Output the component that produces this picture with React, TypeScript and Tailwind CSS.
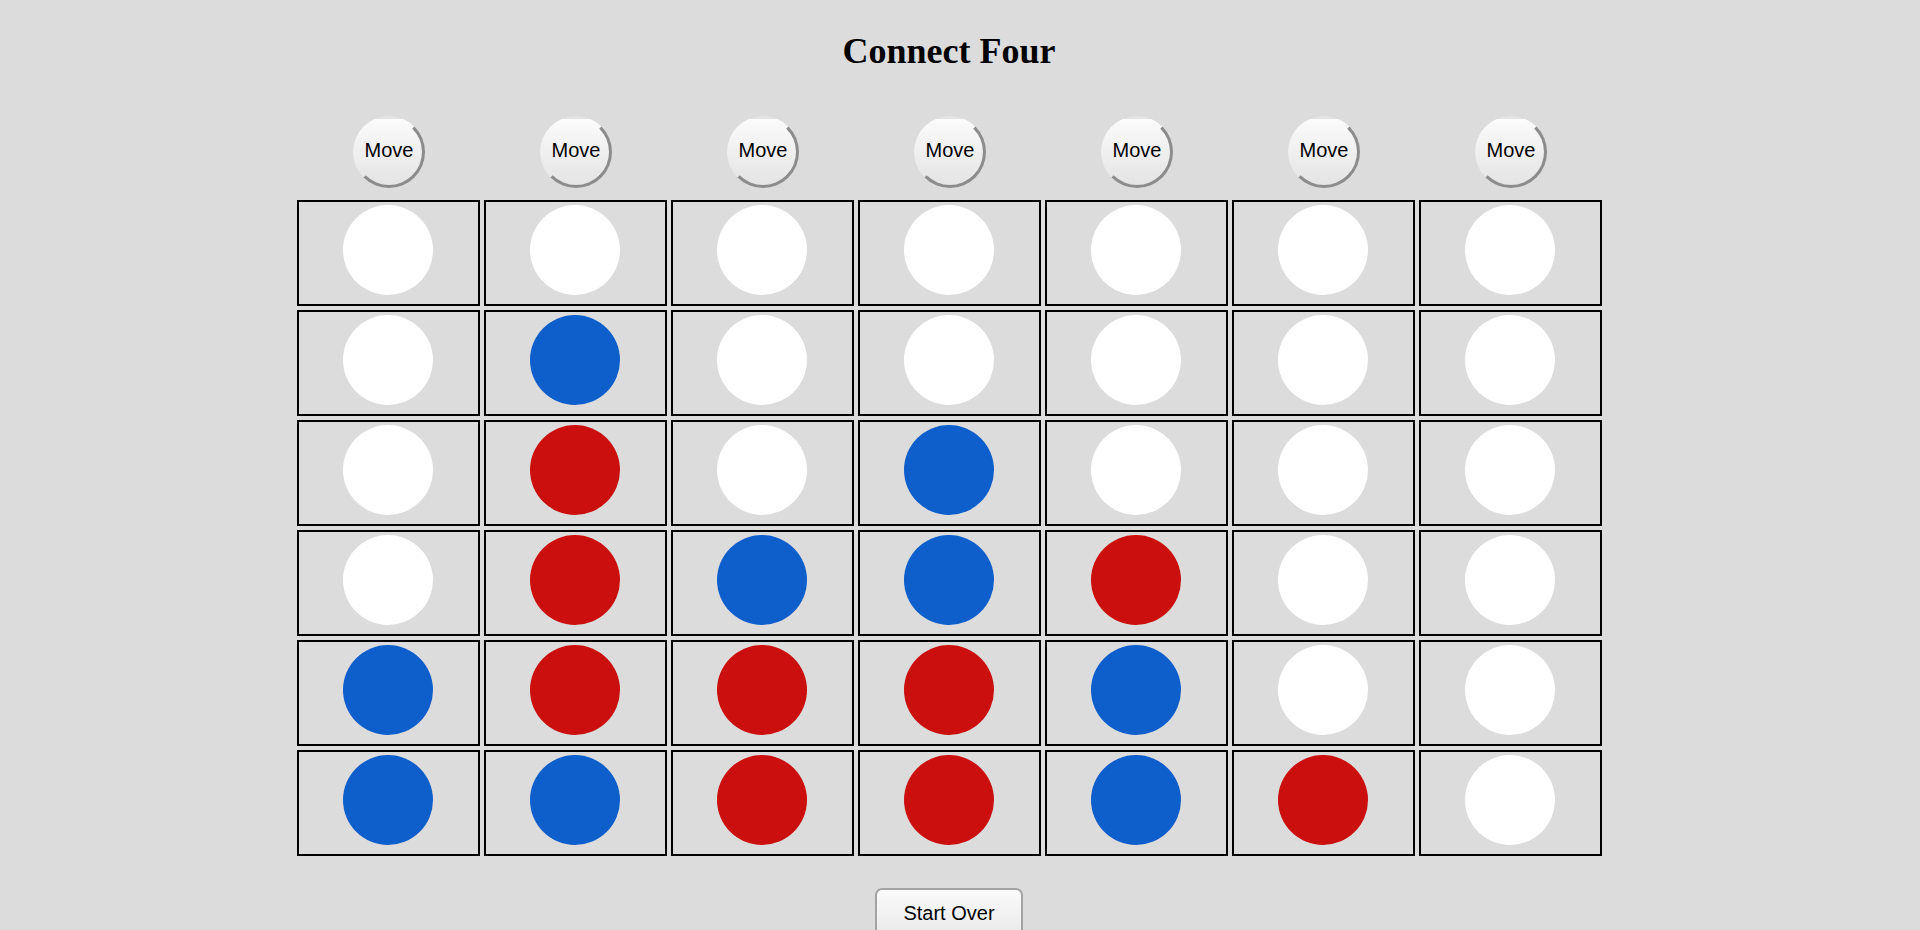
import React from "react";

type C = "W" | "B" | "R";

const board: C[][] = [
  ["W", "W", "W", "W", "W", "W", "W"],
  ["W", "B", "W", "W", "W", "W", "W"],
  ["W", "R", "W", "B", "W", "W", "W"],
  ["W", "R", "B", "B", "R", "W", "W"],
  ["B", "R", "R", "R", "B", "W", "W"],
  ["B", "B", "R", "R", "B", "R", "W"],
];

function Disc({ c }: { c: C }) {
  const cls =
    c === "B" ? "bg-[#0e5ecb]" : c === "R" ? "bg-[#cb0e0e]" : "bg-white";
  return <div className={`w-[90px] h-[90px] rounded-full ${cls}`} />;
}

export default function App() {
  return (
    <div className="w-[1920px] h-[930px] overflow-hidden bg-[#dcdcdc] text-black font-['Liberation_Sans',Arial,sans-serif]">
      <div className="w-[1898px] flex flex-col items-center">
        <h2 className="pt-[31px] text-[36px] leading-[40px] font-bold font-['Liberation_Serif','Times_New_Roman',serif]">
          Connect Four
        </h2>
        <div className="mt-[45px] grid grid-cols-[repeat(7,183px)] gap-x-[4px]">
          {Array.from({ length: 7 }).map((_, i) => (
            <div key={i} className="flex justify-center pl-[2px]">
              <button className="w-[72px] h-[72px] pb-[4px] rounded-full border-[3px] border-t-transparent border-l-transparent border-r-[#8c8c8c] border-b-[#8c8c8c] bg-gradient-to-b from-[#fbfbfb] to-[#e4e4e4] flex items-center justify-center text-[20px] leading-[23px] text-black">
                Move
              </button>
            </div>
          ))}
        </div>
        <div className="mt-[12px] grid grid-cols-[repeat(7,183px)] gap-[4px]">
          {board.flatMap((row, r) =>
            row.map((c, i) => (
              <div
                key={`${r}-${i}`}
                className="h-[106px] border-2 border-black flex justify-center pt-[3px]"
              >
                <Disc c={c} />
              </div>
            ))
          )}
        </div>
        <button className="mt-[32px] w-[148px] pt-[12px] pb-[14px] border-2 border-[#a3a3a3] rounded-[7px] bg-gradient-to-b from-[#fafafa] to-[#e9e9e9] text-[20px] leading-[23px] text-black">
          Start Over
        </button>
      </div>
    </div>
  );
}
